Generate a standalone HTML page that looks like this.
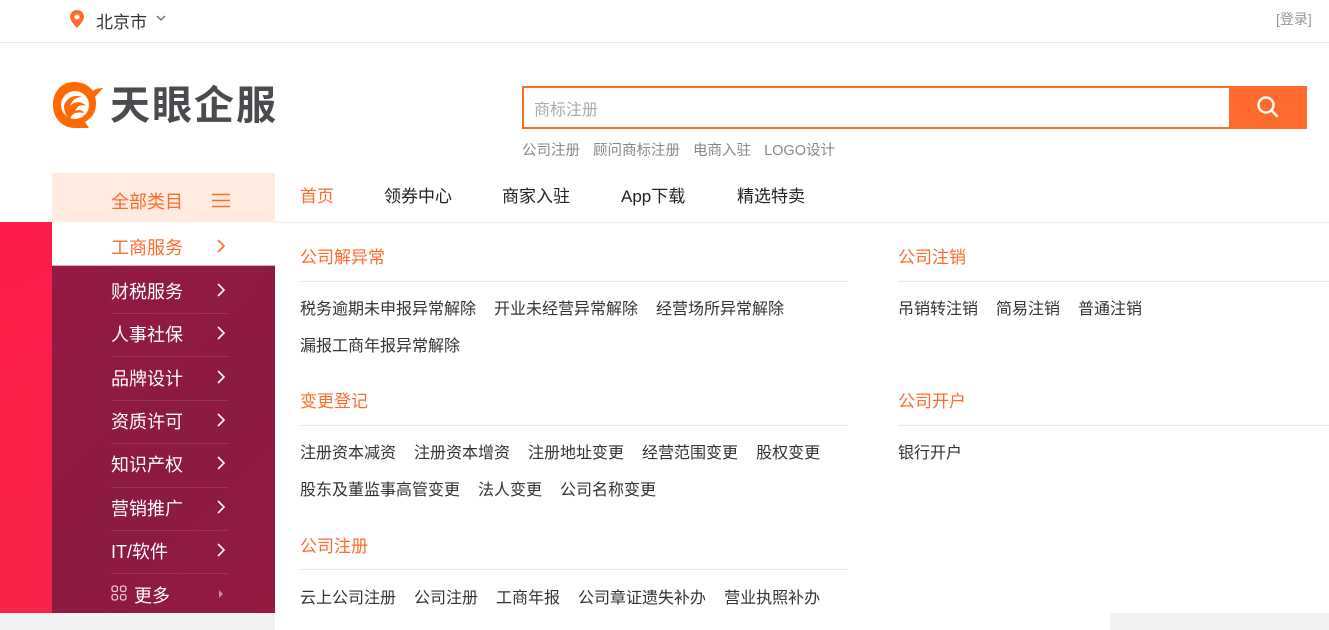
<!DOCTYPE html>
<html><head><meta charset="utf-8"><style>
*{margin:0;padding:0;box-sizing:border-box}
body{width:1329px;height:630px;overflow:hidden;background:#fff;font-family:"Liberation Sans","Noto Sans CJK SC",sans-serif;position:relative;color:#333}
.a{position:absolute}
.top{left:0;top:0;width:1329px;height:43px;border-bottom:1px solid #e8e8e8}
.sb{left:52px;top:173px;width:223px}
.item{position:absolute;left:0;width:223px;height:43px;color:#fff;font-size:18px}
.item span{position:absolute;left:59px;top:12px}
.item svg{position:absolute;left:164px;top:17px}
.line{position:absolute;left:59px;width:118px;height:1px;background:rgba(255,255,255,.1)}
.nav{font-size:17px;color:#222;top:182px}
.h{font-size:17px;color:#ff6b2c}
.hr{height:1px;background:#e8e8e8}
.l{font-size:16px;color:#333;white-space:nowrap;word-spacing:0}
.l b{font-weight:normal;margin-right:18px}
</style></head><body>
<div class="a top"></div>
<svg class="a" style="left:70px;top:10px" width="14" height="18" viewBox="0 0 14 18"><path d="M7 0C3 0 0 3 0 7c0 4 7 11 7 11s7-7 7-11c0-4-3-7-7-7z" fill="#ff6b2c"/><circle cx="7" cy="7" r="2.5" fill="#fff"/></svg>
<div class="a" style="left:96px;top:8px;font-size:17px;color:#333">北京市</div>
<svg class="a" style="left:156px;top:15px" width="10" height="7"><path d="M1 1l4 4 4-4" stroke="#666" fill="none" stroke-width="1.3"/></svg>
<div class="a" style="left:1276px;top:9px;font-size:14px;color:#999">[登录]</div>
<!-- logo -->
<svg class="a" style="left:52px;top:80px" width="56" height="50" viewBox="0 0 56 50"><path d="M22 2C9 2 1 12 1 25s9 23 22 23h14l-4-6c7-4 11-10 11-18 0-2 0-5-1-7l8-9c-4 0-8 1-10 3C37 5 30 2 22 2z" fill="#ff6a00"/><circle cx="23" cy="25" r="14" fill="#fff"/><path d="M12 26c2-8 10-12 18-9-6 0-10 3-12 9 4-5 12-5 16 0-5-2-9 0-11 5 3-2 8-1 9 2-6-1-12-1-14 6-4-3-6-8-6-13z" fill="#ff6a00"/></svg>
<div class="a" style="left:110px;top:81px;font-size:40px;font-weight:bold;color:#4a4a4f;letter-spacing:2px;line-height:50px">天眼企服</div>
<!-- search -->
<div class="a" style="left:522px;top:86px;width:708px;height:43px;border:2px solid #ff6b2c;border-right:none"></div>
<div class="a" style="left:534px;top:96px;font-size:16px;color:#aaa">商标注册</div>
<div class="a" style="left:1229px;top:86px;width:78px;height:43px;background:#ff6b2c"></div>
<svg class="a" style="left:1256px;top:95px" width="24" height="24" viewBox="0 0 24 24"><circle cx="10" cy="10" r="7.5" stroke="#fff" stroke-width="2.4" fill="none"/><path d="M15.5 15.5l5.5 5.5" stroke="#fff" stroke-width="2.6" stroke-linecap="round"/></svg>
<div class="a" style="left:522px;top:139px;font-size:14.5px;color:#888;word-spacing:9px">公司注册 顾问商标注册 电商入驻 LOGO设计</div>
<!-- nav -->
<div class="a" style="left:275px;top:222px;width:1054px;height:1px;background:#eee"></div>
<div class="a nav" style="left:300px;color:#ff6b2c">首页</div>
<div class="a nav" style="left:384px">领券中心</div>
<div class="a nav" style="left:502px">商家入驻</div>
<div class="a nav" style="left:621px">App下载</div>
<div class="a nav" style="left:737px">精选特卖</div>
<!-- sidebar -->
<div class="a" style="left:0;top:222px;width:52px;height:391px;background:linear-gradient(160deg,#ff1c4a,#f8234a)"></div>
<div class="a" style="left:52px;top:173px;width:223px;height:49px;background:#ffeadf"></div>
<div class="a" style="left:111px;top:188px;font-size:18px;color:#ff6b2c">全部类目</div>
<svg class="a" style="left:212px;top:193px" width="18" height="15"><path d="M0 1.5h18M0 7.5h18M0 13.5h18" stroke="#ff6b2c" stroke-width="1.6"/></svg>
<div class="a" style="left:52px;top:222px;width:223px;height:391px;background:linear-gradient(135deg,#951944,#8c1a42 60%,#941a40)"></div>
<div class="a" style="left:52px;top:222px;width:223px;height:44px;background:#fff;border-bottom:1px solid #e0b0c0"></div>
<div class="a sb" style="top:222px">
<div class="item" style="top:0;color:#ff6b2c"><span>工商服务</span><svg width="10" height="14"><path d="M2 1l6 6-6 6" stroke="#ff6b2c" fill="none" stroke-width="1.6"/></svg></div>
<div class="item" style="top:44px"><span>财税服务</span><svg width="10" height="14"><path d="M2 1l6 6-6 6" stroke="#fff" fill="none" stroke-width="1.6"/></svg></div>
<div class="line" style="top:91px"></div>
<div class="item" style="top:87px"><span>人事社保</span><svg width="10" height="14"><path d="M2 1l6 6-6 6" stroke="#fff" fill="none" stroke-width="1.6"/></svg></div>
<div class="line" style="top:134px"></div>
<div class="item" style="top:131px"><span>品牌设计</span><svg width="10" height="14"><path d="M2 1l6 6-6 6" stroke="#fff" fill="none" stroke-width="1.6"/></svg></div>
<div class="line" style="top:178px"></div>
<div class="item" style="top:174px"><span>资质许可</span><svg width="10" height="14"><path d="M2 1l6 6-6 6" stroke="#fff" fill="none" stroke-width="1.6"/></svg></div>
<div class="line" style="top:221px"></div>
<div class="item" style="top:217px"><span>知识产权</span><svg width="10" height="14"><path d="M2 1l6 6-6 6" stroke="#fff" fill="none" stroke-width="1.6"/></svg></div>
<div class="line" style="top:265px"></div>
<div class="item" style="top:261px"><span>营销推广</span><svg width="10" height="14"><path d="M2 1l6 6-6 6" stroke="#fff" fill="none" stroke-width="1.6"/></svg></div>
<div class="line" style="top:308px"></div>
<div class="item" style="top:304px"><span>IT/软件</span><svg width="10" height="14"><path d="M2 1l6 6-6 6" stroke="#fff" fill="none" stroke-width="1.6"/></svg></div>
<div class="line" style="top:351px"></div>
<div class="item" style="top:348px"><span style="left:82px">更多</span><svg width="10" height="14"><path d="M3 3l4 4-4 4z" fill="#c98aa0"/></svg></div>
</div>
<svg class="a" style="left:111px;top:585px" width="16" height="16" viewBox="0 0 16 16" fill="none" stroke="#e8c8d4" stroke-width="1.3"><rect x="1" y="1" width="5.5" height="5.5" rx="2"/><rect x="9.5" y="1" width="5.5" height="5.5" rx="2"/><rect x="1" y="9.5" width="5.5" height="5.5" rx="2"/><rect x="9.5" y="9.5" width="5.5" height="5.5" rx="2"/></svg>
<!-- content -->
<div class="a h" style="left:300px;top:243px">公司解异常</div>
<div class="a hr" style="left:300px;top:281px;width:548px"></div>
<div class="a l" style="left:300px;top:295px"><b>税务逾期未申报异常解除</b><b>开业未经营异常解除</b><b>经营场所异常解除</b></div>
<div class="a l" style="left:300px;top:332px">漏报工商年报异常解除</div>
<div class="a h" style="left:300px;top:387px">变更登记</div>
<div class="a hr" style="left:300px;top:425px;width:548px"></div>
<div class="a l" style="left:300px;top:439px"><b>注册资本减资</b><b>注册资本增资</b><b>注册地址变更</b><b>经营范围变更</b><b>股权变更</b></div>
<div class="a l" style="left:300px;top:476px"><b>股东及董监事高管变更</b><b>法人变更</b><b>公司名称变更</b></div>
<div class="a h" style="left:300px;top:532px">公司注册</div>
<div class="a hr" style="left:300px;top:569px;width:548px"></div>
<div class="a l" style="left:300px;top:584px"><b>云上公司注册</b><b>公司注册</b><b>工商年报</b><b>公司章证遗失补办</b><b>营业执照补办</b></div>
<div class="a h" style="left:898px;top:243px">公司注销</div>
<div class="a hr" style="left:898px;top:281px;width:431px"></div>
<div class="a l" style="left:898px;top:295px"><b>吊销转注销</b><b>简易注销</b><b>普通注销</b></div>
<div class="a h" style="left:898px;top:387px">公司开户</div>
<div class="a hr" style="left:898px;top:425px;width:431px"></div>
<div class="a l" style="left:898px;top:439px">银行开户</div>
<div class="a" style="left:0;top:613px;width:1329px;height:17px;background:#f2f2f2"></div>
<div class="a" style="left:275px;top:613px;width:835px;height:17px;background:#fff"></div>
</body></html>
